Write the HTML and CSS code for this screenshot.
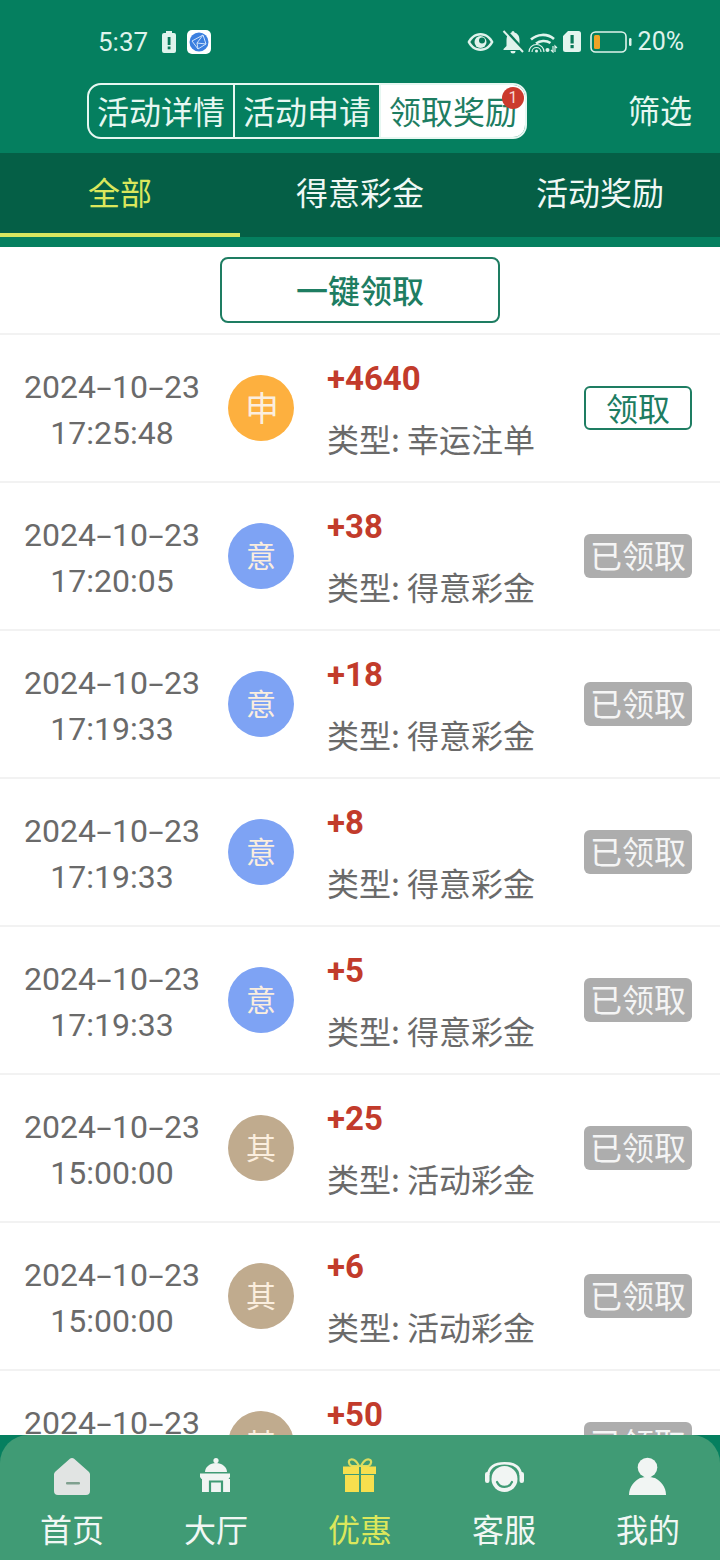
FILE: index.html
```html
<!DOCTYPE html>
<html lang="zh-CN">
<head>
<meta charset="utf-8">
<title>领取奖励</title>
<link rel="stylesheet" href="styles.css">
</head>
<body>
<div class="app">
  <header class="top">
    <div class="status">
      <div class="status-left">
        <span class="time">5:37</span>
        <svg class="ic-batt" width="14" height="22" viewBox="0 0 14 22"><path d="M4 0h6v2h2a2 2 0 0 1 2 2v16a2 2 0 0 1-2 2H2a2 2 0 0 1-2-2V4a2 2 0 0 1 2-2h2z" fill="#dff3ec"/><rect x="5.7" y="6" width="2.8" height="8" fill="#0a7a5a"/><rect x="5.7" y="15.5" width="2.8" height="2.8" fill="#0a7a5a"/></svg>
        <svg class="ic-app" width="24" height="24" viewBox="0 0 24 24"><rect width="24" height="24" rx="5" fill="#fff"/><circle cx="12" cy="12" r="9.500" fill="#3b7fe0"/><path d="M5 11l11-6 3 9-8 5zM11 19l-1-6 6-8M10 13l9 1" fill="none" stroke="#cfe2fa" stroke-width="1"/></svg>
      </div>
      <div class="status-right">
        <svg class="ic-eye" width="27" height="20" viewBox="0 0 27 20"><path d="M13.500 1C7.500 1 2.800 5 .5 10c2.300 5 7 9 13 9s10.700-4 13-9c-2.300-5-7-9-13-9z" fill="#dff3ec"/><path d="M13.500 3.500C9 3.500 5.300 6.300 3.300 10c2 3.700 5.700 6.500 10.200 6.500S21.700 13.700 23.700 10c-2-3.700-5.700-6.500-10.200-6.500z" fill="#0a7a5a"/><circle cx="13.500" cy="10" r="6" fill="#dff3ec"/><circle cx="15" cy="8.500" r="3" fill="#0a7a5a"/></svg>
        <svg class="ic-bell" width="22" height="24" viewBox="0 0 22 24"><path d="M11 1a1.500 1.500 0 0 1 1.500 1.500C16 3.500 17.500 6.500 17.500 10v6l3 3v1H1.500v-1l3-3v-6C4.500 6.500 6 3.500 9.500 2.500A1.500 1.500 0 0 1 11 1zM8.500 21h5a2.500 2.500 0 0 1-5 0z" fill="#dff3ec"/><path d="M3 0l19 21" stroke="#0a7a5a" stroke-width="3.500"/><path d="M1.500 1l19.500 21" stroke="#dff3ec" stroke-width="2"/></svg>
        <svg class="ic-wifi" width="30" height="22" viewBox="0 0 30 22"><g fill="none" stroke="#dff3ec" stroke-width="2.600"><path d="M3 8.500C9 3 19 2 26 8"/><path d="M8 12.500c4-3 10-3.500 14.500-.5"/></g><g fill="none" stroke="#dff3ec" stroke-width="1.200"><path d="M1 21a7.500 7.500 0 0 1 15 0"/><path d="M4 21a4.500 4.500 0 0 1 9 0"/></g><circle cx="8.500" cy="20" r="1.500" fill="#dff3ec"/><circle cx="19.500" cy="19" r="2" fill="#dff3ec"/><path d="M25 15v6l-2-2M27 21v-6l2 2" fill="none" stroke="#dff3ec" stroke-width="1.200"/></svg>
        <svg class="ic-doc" width="18" height="21" viewBox="0 0 18 21"><path d="M5 0h10.500A2.500 2.500 0 0 1 18 2.500v16a2.500 2.500 0 0 1-2.500 2.500h-13A2.500 2.500 0 0 1 0 18.500V5z" fill="#e4f5ef"/><rect x="7.500" y="4" width="3.200" height="8.500" fill="#0a7a5a"/><rect x="7.500" y="14" width="3.200" height="3.200" fill="#0a7a5a"/></svg>
        <svg class="ic-level" width="42" height="22" viewBox="0 0 42 22"><rect x="1" y="1" width="35" height="20" rx="4.500" fill="none" stroke="#dff3ec" stroke-width="1.600"/><rect x="4" y="4" width="6" height="14" rx="1.500" fill="#f0a326"/><rect x="39" y="7" width="2.500" height="8" rx="1.200" fill="#dff3ec"/></svg>
        <span class="pct">20%</span>
      </div>
    </div>
    <div class="titlebar">
      <div class="segments">
        <span class="seg seg-first">活动详情</span>
        <span class="seg seg-mid">活动申请</span>
        <span class="seg seg-on">领取奖励<i class="badge">1</i></span>
      </div>
      <span class="filter">筛选</span>
    </div>
  </header>

  <nav class="tabs">
    <span class="tab tab-on">全部</span>
    <span class="tab">得意彩金</span>
    <span class="tab">活动奖励</span>
  </nav>
  <div class="tabs-foot"></div>

  <div class="claim-all-wrap"><button class="claim-all">一键领取</button></div>

  <main class="list">
    <section class="row">
      <div class="date"><span>2024<i class="hy">-</i>10<i class="hy">-</i>23</span><span>17:25:48</span></div>
      <span class="dot dot-o">申</span>
      <div class="info"><b class="amt">+4640</b><span class="type">类型: 幸运注单</span></div>
      <span class="btn btn-go">领取</span>
    </section>
    <section class="row">
      <div class="date"><span>2024<i class="hy">-</i>10<i class="hy">-</i>23</span><span>17:20:05</span></div>
      <span class="dot dot-b">意</span>
      <div class="info"><b class="amt">+38</b><span class="type">类型: 得意彩金</span></div>
      <span class="btn btn-done">已领取</span>
    </section>
    <section class="row">
      <div class="date"><span>2024<i class="hy">-</i>10<i class="hy">-</i>23</span><span>17:19:33</span></div>
      <span class="dot dot-b">意</span>
      <div class="info"><b class="amt">+18</b><span class="type">类型: 得意彩金</span></div>
      <span class="btn btn-done">已领取</span>
    </section>
    <section class="row">
      <div class="date"><span>2024<i class="hy">-</i>10<i class="hy">-</i>23</span><span>17:19:33</span></div>
      <span class="dot dot-b">意</span>
      <div class="info"><b class="amt">+8</b><span class="type">类型: 得意彩金</span></div>
      <span class="btn btn-done">已领取</span>
    </section>
    <section class="row">
      <div class="date"><span>2024<i class="hy">-</i>10<i class="hy">-</i>23</span><span>17:19:33</span></div>
      <span class="dot dot-b">意</span>
      <div class="info"><b class="amt">+5</b><span class="type">类型: 得意彩金</span></div>
      <span class="btn btn-done">已领取</span>
    </section>
    <section class="row">
      <div class="date"><span>2024<i class="hy">-</i>10<i class="hy">-</i>23</span><span>15:00:00</span></div>
      <span class="dot dot-t">其</span>
      <div class="info"><b class="amt">+25</b><span class="type">类型: 活动彩金</span></div>
      <span class="btn btn-done">已领取</span>
    </section>
    <section class="row">
      <div class="date"><span>2024<i class="hy">-</i>10<i class="hy">-</i>23</span><span>15:00:00</span></div>
      <span class="dot dot-t">其</span>
      <div class="info"><b class="amt">+6</b><span class="type">类型: 活动彩金</span></div>
      <span class="btn btn-done">已领取</span>
    </section>
    <section class="row">
      <div class="date"><span>2024<i class="hy">-</i>10<i class="hy">-</i>23</span><span>15:00:00</span></div>
      <span class="dot dot-t">其</span>
      <div class="info"><b class="amt">+50</b><span class="type">类型: 活动彩金</span></div>
      <span class="btn btn-done">已领取</span>
    </section>
  </main>

  <footer class="dock">
    <div class="dock-inner">
      <div class="dock-item">
        <svg width="48" height="48" viewBox="0 0 48 48"><path d="M24 6c.8 0 1.500.3 2.100.8l14.400 12.800c1 .8 1.500 1.900 1.500 3.200V39a4 4 0 0 1-4 4H10a4 4 0 0 1-4-4V22.800c0-1.300.5-2.400 1.500-3.200L21.900 6.800c.6-.5 1.300-.8 2.100-.8z" fill="#e1e4e3"/><rect x="18" y="30" width="14" height="2.500" rx="1" fill="#7fa08f"/></svg>
        <span>首页</span>
      </div>
      <div class="dock-item">
        <svg width="48" height="48" viewBox="0 0 48 48"><circle cx="24" cy="8.500" r="2.600" fill="#f1f5f3"/><path d="M13 20c0-5 5-9 11-9s11 4 11 9z" fill="#f1f5f3"/><path d="M8 21.500h30v3.500l-1.500 2H9.500L8 25z" fill="#f1f5f3"/><rect x="10" y="27" width="28" height="13" fill="#f1f5f3"/><path d="M18 40V29.500h12V40" fill="none" stroke="#409b75" stroke-width="2.200"/></svg>
        <span>大厅</span>
      </div>
      <div class="dock-item dock-on">
        <svg width="48" height="48" viewBox="0 0 48 48"><g fill="none" stroke="#dcdc60" stroke-width="2.200"><path d="M23 14c-2-4-5-7-8-6.500-3 .6-2.800 5 .5 6.500z"/><path d="M25 14c2-4 5-7 8-6.500 3 .6 2.800 5-.5 6.500z"/></g><path d="M7 14.500h16v7.500H7zM25 14.500h15v7.500H25z" fill="#f7df4e"/><path d="M9 23h14v17H9zM25 23h13v17H25z" fill="#f7df4e"/></svg>
        <span>优惠</span>
      </div>
      <div class="dock-item">
        <svg width="48" height="48" viewBox="0 0 48 48"><circle cx="24.500" cy="27" r="13" fill="#f1f5f3"/><path d="M8 23C9 15 15 11.200 24.500 11.200S40 15 41 23" fill="none" stroke="#f1f5f3" stroke-width="2.600"/><rect x="5" y="20" width="4.500" height="11" rx="2.200" fill="#f1f5f3"/><rect x="39.500" y="20" width="4.500" height="11" rx="2.200" fill="#f1f5f3"/><path d="M17 30c3 6.500 12 6.500 15 0" fill="none" stroke="#409b75" stroke-width="2.200" stroke-linecap="round"/></svg>
        <span>客服</span>
      </div>
      <div class="dock-item">
        <svg width="48" height="48" viewBox="0 0 48 48"><circle cx="23.500" cy="15.500" r="9.800" fill="#f1f5f3"/><path d="M5 43c0-8.500 5.500-14 11-17 4-1.500 11-1.500 15 0 5.500 3 11 8.500 11 17z" fill="#f1f5f3"/></svg>
        <span>我的</span>
      </div>
    </div>
  </footer>
</div>
</body>
</html>
```

FILE: styles.css
```css
* { box-sizing: border-box; margin: 0; padding: 0; }
html, body { width: 720px; height: 1560px; overflow: hidden; background: #fff; }
body { font-family: "Noto Sans CJK SC", Roboto, sans-serif; font-size: 32px; color: #6a6a6a; }
.app { position: relative; width: 720px; height: 1560px; overflow: hidden; display: flex; flex-direction: column; }

.top { background: #057f5f; height: 153px; color: #e6f7f1; flex: none; }
.status { height: 83px; display: flex; justify-content: space-between; align-items: center; padding: 0 36px 0 98px; }
.status-left, .status-right { display: flex; align-items: center; }
.time { font: 26px/30px Roboto, sans-serif; color: #dff3ec; width: 52px; margin-right: 12px; }
.ic-app { margin-left: 11px; }
.status-right svg { flex: none; }
.ic-eye { margin-right: 8px; }
.ic-bell { margin-right: 4px; }
.ic-wifi { margin-right: 5px; }
.ic-doc { margin-right: 9px; }
.ic-level { margin-right: 6px; }
.pct { font: 25px/30px Roboto, sans-serif; color: #dff3ec; }

.titlebar { position: relative; height: 56px; display: flex; align-items: center; padding-left: 87px; }
.segments { width: 440px; height: 56px; display: flex; border: 2px solid #e6f7f1; border-radius: 14px; }
.seg { display: flex; align-items: center; justify-content: center; white-space: nowrap; padding-bottom: 3px; }
.seg-first { width: 146px; border-right: 2px solid #e6f7f1; }
.seg-mid { width: 146px; border-right: 2px solid #e6f7f1; }
.seg-on { position: relative; flex: 1; background: #fff; color: #1e7d62; border-radius: 0 12px 12px 0; }
.badge { position: absolute; right: 1px; top: 2px; width: 22px; height: 22px; border-radius: 50%; background: #cb3a2d; color: #f6d9d5; font: 16px/22px Roboto, sans-serif; text-align: center; }
.filter { margin: 0 0 3px 101px; line-height: 53px; }

.tabs { height: 84px; background: #055f46; display: flex; flex: none; }
.tab { width: 240px; height: 84px; line-height: 76px; text-align: center; color: #f0f8f5; }
.tab-on { color: #dbe75c; border-bottom: 4px solid #d8e660; }
.tabs-foot { height: 10px; background: #057f5f; flex: none; }

.claim-all-wrap { height: 86px; padding-top: 10px; display: flex; justify-content: center; align-items: flex-start; flex: none; }
.claim-all { width: 280px; height: 66px; padding-bottom: 3px; background: #fff; border: 2px solid #1e7d62; border-radius: 8px; color: #1e7d62; font: 500 32px/58px "Noto Sans CJK SC", sans-serif; }

.list { flex: none; border-top: 2px solid #f2f2f2; }
.row { height: 148px; display: flex; align-items: center; border-bottom: 2px solid #f2f2f2; }
.date { width: 224px; padding-top: 4px; display: flex; flex-direction: column; align-items: center; font: 32px/46px Roboto, sans-serif; color: #6a6a6a; }
.hy { display: inline-block; width: 16px; text-align: center; font-style: normal; transform: scaleX(1.7); }
.dot { width: 66px; height: 66px; margin: 0 0 0 4px; border-radius: 50%; color: #fbeede; text-align: center; line-height: 62px; flex: none; }
.dot-o { background: #fdb03f; font-size: 34px; line-height: 64px; padding-left: 2px; }
.dot-b { background: #7ea3f4; font-size: 30px; }
.dot-t { background: #c0ab8e; font-size: 30px; }
.info { margin-left: 33px; width: 257px; padding-top: 3px; display: flex; flex-direction: column; }
.amt { font: 700 33px/42px Roboto, sans-serif; color: #c23b2b; height: 42px; }
.type { line-height: 46px; margin-top: 15px; white-space: nowrap; }
.btn { width: 108px; height: 44px; border-radius: 6px; text-align: center; line-height: 40px; white-space: nowrap; flex: none; }
.btn-go { border: 2px solid #1e7d62; color: #1e7d62; line-height: 38px; }
.btn-done { background: #adadad; color: #f5f5f5; }

.dock { position: absolute; left: 0; right: 0; bottom: 0; height: 125px; background: #057f5f; }
.dock-inner { height: 125px; background: #409b75; border-radius: 28px 28px 0 0; display: flex; }
.dock-item { width: 144px; display: flex; flex-direction: column; align-items: center; padding-top: 17px; color: #f1f7f4; }
.dock-item span { line-height: 46px; margin-top: 5px; }
.dock-on { color: #dbe75c; }
```
